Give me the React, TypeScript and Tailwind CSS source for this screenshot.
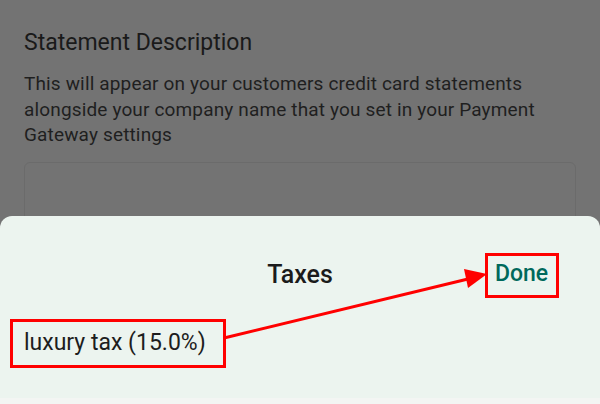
import React from "react";

const Annotations = () => (
  <svg className="pointer-events-none absolute inset-0" width={600} height={404} viewBox="0 0 600 404">
    <rect x={11.5} y={320.5} width={213} height={46} fill="none" stroke="#ff0000" strokeWidth={3} />
    <rect x={486.5} y={254.5} width={71} height={42} fill="none" stroke="#ff0000" strokeWidth={3} />
    <line x1={224} y1={338} x2={468} y2={279} stroke="#ff0000" strokeWidth={3} />
    <polygon points="487,274 464,269 468,288" fill="#ff0000" />
  </svg>
);

export default function App() {
  return (
    <div className="relative h-[404px] w-[600px] overflow-hidden bg-[#737373] font-['Roboto',sans-serif]">
      {/* page behind the scrim */}
      <div className="flex flex-col px-6 pt-[29px]">
        <h2 className="text-[23px] leading-[28px] text-[#1a1a1a]">Statement Description</h2>
        <p className="mt-[14px] text-[19px] leading-[25.5px] tracking-[0.15px] text-[#1f1f1f]">
          This will appear on your customers credit card statements alongside your company name that you set in your
          Payment Gateway settings
        </p>
        <div className="mt-[14px] h-[80px] rounded-md border border-[#6b6b6b]" />
      </div>

      {/* bottom sheet */}
      <div className="absolute inset-x-0 top-[216px] bottom-0 flex flex-col rounded-t-[12px] bg-[#ecf4ef]">
        <div className="relative flex h-[113px] items-start justify-center pt-[43px]">
          <span className="text-[25px] leading-[32px] font-medium text-[#1b1b1b]">Taxes</span>
          <span className="absolute left-[495px] top-[42px] text-[23px] leading-[32px] font-medium text-[#00695c]">
            Done
          </span>
        </div>
        <div className="px-6 text-[23px] leading-[28px] text-[#1d1d1d]">luxury tax (15.0%)</div>
        <div className="flex-1" />
        <div className="h-[6px] bg-[#f3f5f3]" />
      </div>

      <Annotations />
    </div>
  );
}
